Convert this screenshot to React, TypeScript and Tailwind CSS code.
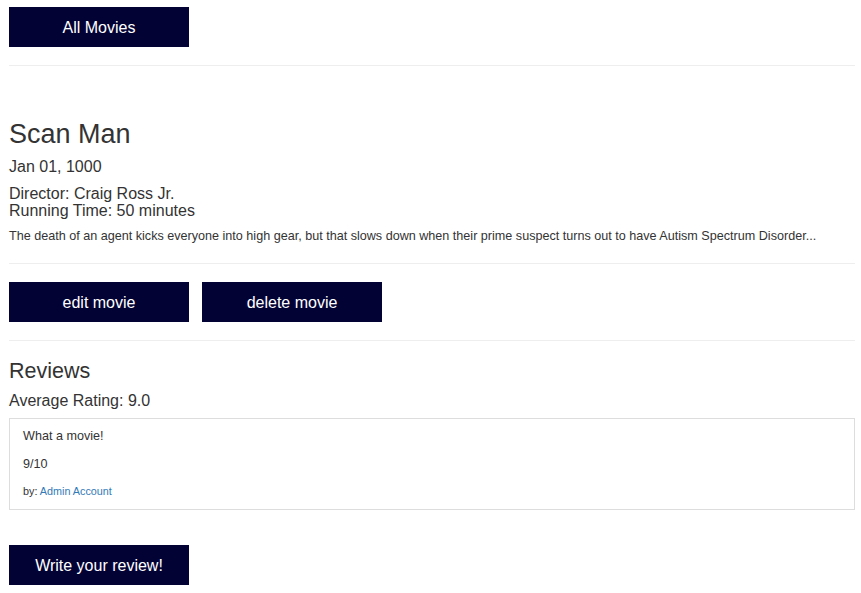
const FONT = { fontFamily: '"Liberation Sans", Arial, sans-serif' };

function NavyButton({ label }: { label: string }) {
  return (
    <button className="w-[180px] h-10 pt-px bg-[#020235] text-white text-[16px] leading-none">
      {label}
    </button>
  );
}

function Rule({ className = "" }: { className?: string }) {
  return <hr className={`border-0 border-t border-[#eeeeee] ${className}`} />;
}

export default function App() {
  return (
    <div style={FONT} className="min-h-screen bg-white text-[#333333] pl-[9px] pr-[6px] pt-[7px] pb-8">
      <NavyButton label="All Movies" />
      <Rule className="mt-[18px]" />

      <h2 className="mt-[52px] text-[27px] leading-[32px] font-normal">Scan Man</h2>
      <h4 className="mt-[7px] text-[16px] leading-[20px]">Jan 01, 1000</h4>
      <div className="mt-[8px] text-[16px] leading-[17px]">
        <div>Director: Craig Ross Jr.</div>
        <div>Running Time: 50 minutes</div>
      </div>
      <p className="mt-[8px] text-[12.6px] leading-[18px]">
        The death of an agent kicks everyone into high gear, but that slows down when their prime suspect turns out to have Autism Spectrum Disorder...
      </p>
      <Rule className="mt-[18px]" />

      <div className="mt-[18px] flex gap-[13px]">
        <NavyButton label="edit movie" />
        <NavyButton label="delete movie" />
      </div>
      <Rule className="mt-[18px]" />

      <h3 className="mt-[16px] text-[21.5px] leading-[28px]">Reviews</h3>
      <h4 className="mt-[6px] text-[16px] leading-[20px]">Average Rating: 9.0</h4>

      <div className="mt-[7px] border border-[#dddddd] pl-[13px] pt-[8px] pb-[10px]">
        <p className="text-[12.6px] leading-[18px] mb-[10px]">What a movie!</p>
        <p className="text-[12.6px] leading-[18px] mb-[10px]">9/10</p>
        <p className="text-[10.8px] leading-[16px]">
          by: <a href="#" className="text-[#337ab7]">Admin Account</a>
        </p>
      </div>

      <div className="mt-[35px]">
        <NavyButton label="Write your review!" />
      </div>
    </div>
  );
}
